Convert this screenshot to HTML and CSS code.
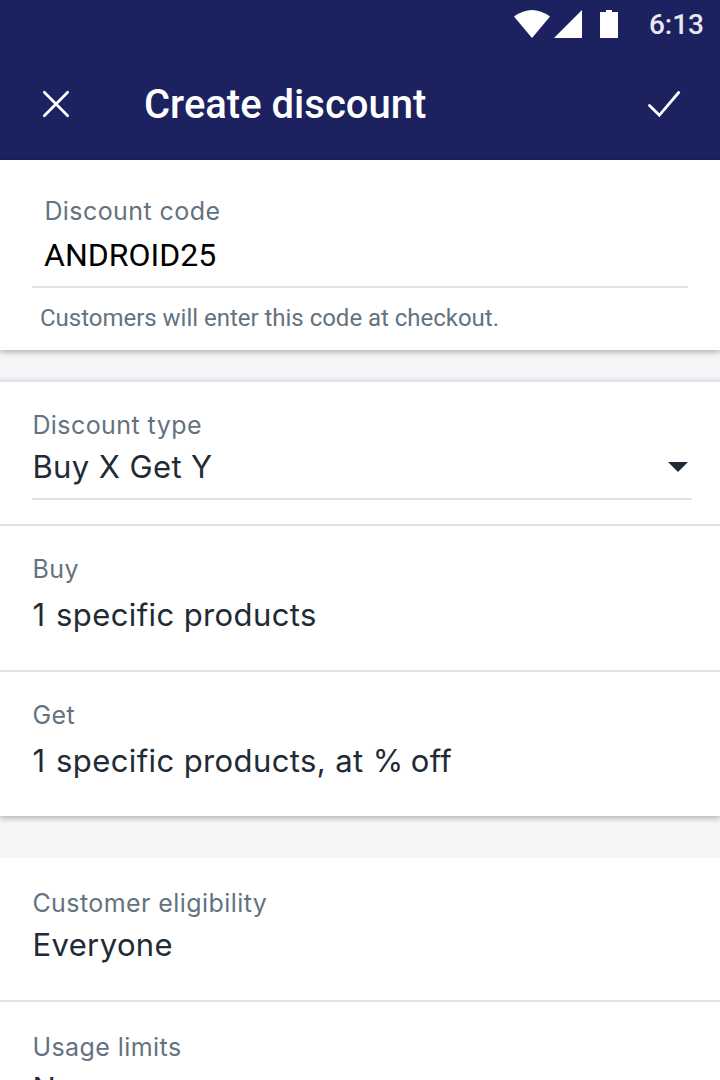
FILE: index.html
```html
<!DOCTYPE html>
<html lang="en">
<head>
<meta charset="utf-8">
<title>Create discount</title>
<link rel="stylesheet" href="styles.css">
</head>
<body>
<div class="screen">
  <div class="statusbar">
    <svg class="status-icons" width="106" height="30" viewBox="0 0 106 30" fill="#fff">
      <path d="M0 6.500Q18 -6.500 36 6.500L18 28Z"/>
      <path d="M40 28L68 0V28Z"/>
      <path d="M86 2h6V0h6v2h6V28H86Z"/>
    </svg>
    <span class="clock">6:13</span>
  </div>
  <header class="appbar">
    <svg width="28" height="28" viewBox="0 0 28 28" fill="none" stroke="#fff" stroke-width="2.700" stroke-linecap="round"><path d="M2.300 2.300L25.700 25.700M25.700 2.300L2.300 25.700"/></svg>
    <h1 class="title">Create discount</h1>
    <svg width="34" height="28" viewBox="0 0 34 28" fill="none" stroke="#fff" stroke-width="2.800" stroke-linecap="round"><path d="M2.500 15.500L12.300 25.300L31.700 2.500"/></svg>
  </header>
  <section class="card code-card">
    <div class="code-field">
      <div class="label">Discount code</div>
      <div class="input">ANDROID25</div>
    </div>
    <p class="help">Customers will enter this code at checkout.</p>
  </section>
  <section class="card type-card">
    <div class="row type-row">
      <div class="select">
        <div class="label">Discount type</div>
        <div class="select-line"><span class="value">Buy X Get Y</span>
        <svg width="20" height="10" viewBox="0 0 20 10" fill="#212b36"><path d="M0 0H20L10 10Z"/></svg></div>
      </div>
    </div>
    <div class="row detail">
      <div class="label">Buy</div>
      <div class="value"><span class="count">1</span> specific products</div>
    </div>
    <div class="row detail">
      <div class="label">Get</div>
      <div class="value"><span class="count">1</span> specific products, at <span class="percent">%</span> off</div>
    </div>
  </section>
  <section class="card more-card">
    <div class="row eligibility">
      <div class="label">Customer eligibility</div>
      <div class="value">Everyone</div>
    </div>
    <div class="row usage">
      <div class="label">Usage limits</div>
      <div class="value">None</div>
    </div>
  </section>
</div>
</body>
</html>
```
FILE: styles.css
```css
* { box-sizing: border-box; }
body { margin: 0; font-family: Roboto, sans-serif; background: #f4f6f8; }
svg { display: block; }
.screen { width: 720px; height: 1080px; overflow: hidden; background: #f4f6f8; }
.statusbar { height: 48px; padding: 10px 16px 0 0; display: flex; justify-content: flex-end; align-items: flex-start; gap: 29px; background: #1c2260; }
.clock { color: #fff; font-size: 28px; line-height: 30px; font-weight: 500; opacity: .9; }
.appbar { height: 112px; padding: 0 39px 0 42px; display: flex; align-items: center; background: #1c2260; }
.title { flex: 1; margin: 2px 0 0 74px; font-size: 40px; line-height: 48px; font-weight: 500; color: #fff; }
.card { background: #fff; box-shadow: 0 2px 6px rgba(0,0,0,.3); }
.code-card { height: 190px; padding: 36px 32px 0; }
.code-field { height: 92px; padding-left: 12px; border-bottom: 2px solid #dfe3e8; }
.label { padding-left: .4px; font-family: Inter, sans-serif; font-size: 25px; line-height: 30px; letter-spacing: .43px; color: #637381; }
.input { margin-top: 10px; font-size: 32px; line-height: 38px; color: #000; }
.help { margin: 16px 0 0 8px; font-size: 24px; line-height: 28px; letter-spacing: -.02px; color: #637381; }
.value { padding-left: .4px; font-family: Inter, sans-serif; font-size: 31px; line-height: 38px; letter-spacing: .4px; color: #212b36; white-space: nowrap; }
.count { letter-spacing: 1.9px; }
.percent { letter-spacing: -1.6px; }
.type-card { margin-top: 30px; height: 436px; border-top: 2px solid #dfe3e8; }
.row { padding: 28px 28px 0 32px; }
.row + .row { border-top: 2px solid #dfe3e8; }
.type-row { height: 142px; }
.select { height: 90px; border-bottom: 2px solid #dfe3e8; }
.select-line { display: flex; align-items: center; justify-content: space-between; margin-top: 8px; padding-right: 4px; }
.detail { height: 146px; }
.detail .value { margin-top: 12px; }
.more-card { margin-top: 42px; box-shadow: none; }
.eligibility { height: 142px; padding-top: 30px; }
.eligibility .value, .usage .value { margin-top: 8px; }
.usage { height: 146px; padding-top: 30px; }
```
